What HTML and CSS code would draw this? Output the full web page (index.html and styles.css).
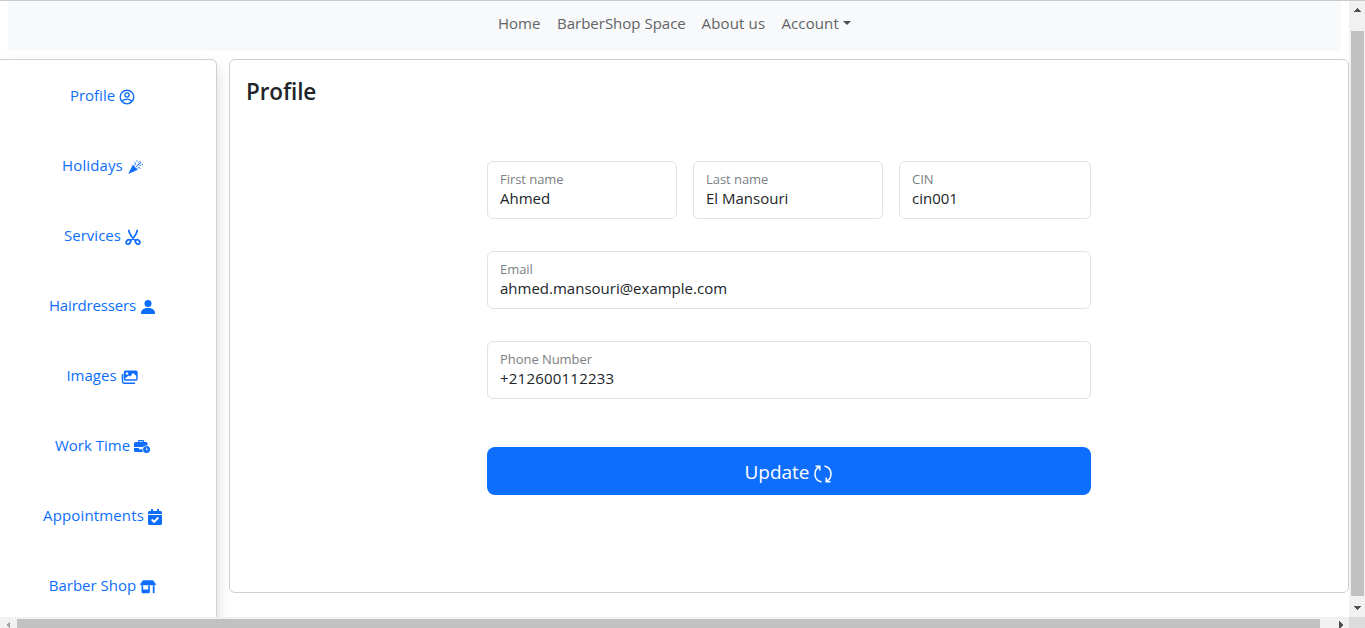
FILE: index.html
```html
<!DOCTYPE html>
<html lang="en">
<head>
<meta charset="utf-8">
<title>Profile</title>
<link rel="stylesheet" href="styles.css">
</head>
<body>
<div class="window">
  <div class="viewport">
    <nav class="navbar">
      <a class="nav-home">Home</a>
      <a class="nav-space">BarberShop Space</a>
      <a class="nav-about">About us</a>
      <a class="nav-account">Account</a><i class="caret"></i>
    </nav>
    <div class="content">
      <aside class="sidebar">
        <a class="item"><span>Profile</span>
          <svg width="16" height="16" viewBox="0 0 16 16" fill="none" stroke="currentColor" stroke-width="1.35"><circle cx="8" cy="8" r="6.8"/><circle cx="8" cy="6" r="2.1"/><path d="M3.2 12.6C5 9.3 11 9.3 12.8 12.6"/></svg></a>
        <a class="item"><span class="holidays">Holidays</span>
          <svg width="16" height="16" viewBox="0 0 16 16"><path fill="currentColor" d="M5.8 5.800 10.800 10.800 1.200 15Z"/><g fill="none" stroke="currentColor" stroke-width="1"><path d="M7.300 6.500C9 5.200 8.800 4 7.400 3M10.400 9.200C11.600 8.300 12.700 8.600 13.500 9.600M9 7.700 14 3.400"/></g><path fill="currentColor" d="M9.300 1.400h1.200v1.200H9.300zM11.200 3.200h1v1h-1zM12.500 2h1v1h-1zM14.600 5h1.200v1.200h-1.200zM12.600 6h1v1h-1z"/></svg></a>
        <a class="item"><span>Services</span>
          <svg width="16" height="16" viewBox="0 0 16 16" fill="none" stroke="currentColor" stroke-width="1.7"><path d="M3.800 .8C3.600 3.500 5.400 5.800 7 8l3.500 3.700M12.200.8C12.400 3.500 10.600 5.800 9 8l-3.500 3.700"/><ellipse cx="3.400" cy="12.900" rx="1.900" ry="2.500" transform="rotate(42 3.400 12.900)"/><ellipse cx="12.600" cy="12.900" rx="1.900" ry="2.500" transform="rotate(-42 12.600 12.900)"/></svg></a>
        <a class="item"><span class="hairdressers">Hairdressers</span>
          <svg width="16" height="16" viewBox="0 0 16 16" fill="currentColor"><circle cx="8" cy="4.500" r="3.500"/><path d="M1 15v-1.200C1.200 10.800 4 9 8 9s6.800 1.800 7 4.800V15Z"/></svg></a>
        <a class="item"><span>Images</span>
          <svg width="18" height="16" viewBox="0 0 18 16"><path fill="none" stroke="currentColor" stroke-width="1.500" d="M1.500 5v7.500q0 1.700 1.700 1.700H14"/><path fill="currentColor" fill-rule="evenodd" d="M4.500 1.500h10.500q1.700 0 1.700 1.700v6.800q0 1.700-1.700 1.700H4.500q-1.700 0-1.700-1.700V3.200q0-1.700 1.700-1.700ZM4.300 10.200H15.200V6.800L12 4 9.300 7.500 7.700 6.400 4.300 9.200ZM6 3.200a1.300 1.300 0 1 0 0 2.600 1.300 1.300 0 0 0 0-2.600Z"/></svg></a>
        <a class="item"><span>Work Time</span>
          <svg width="16" height="16" viewBox="0 0 16 16"><path fill="currentColor" fill-rule="evenodd" d="M4 3V2q0-1 1-1h4q1 0 1 1v1h2q1.500 0 1.500 1.500V6.500H12Q10 6.500 9 8H0V4.500Q0 3 1.500 3ZM5.200 3h3.600V2.200H5.200ZM0 9h5v1.300h3.300V9h.3q-.8 2.200.4 4H1.300Q0 13 0 11.700Z"/><circle cx="12.600" cy="10.600" r="3.500" fill="currentColor"/><path d="M12.500 8.500v2.300H14" fill="none" stroke="#fff" stroke-width=".8"/></svg></a>
        <a class="item"><span class="appointments">Appointments</span>
          <svg width="14" height="16" viewBox="0 0 448 512" fill="currentColor"><path d="M436 160H12c-6.600 0-12-5.400-12-12v-36c0-26.500 21.500-48 48-48h48V12c0-6.600 5.400-12 12-12h40c6.600 0 12 5.400 12 12v52h128V12c0-6.600 5.400-12 12-12h40c6.600 0 12 5.400 12 12v52h48c26.500 0 48 21.500 48 48v36c0 6.600-5.400 12-12 12zM12 192h424c6.600 0 12 5.400 12 12v260c0 26.500-21.500 48-48 48H48c-26.500 0-48-21.500-48-48V204c0-6.600 5.400-12 12-12zm333.300 96-28.200-28.400c-4.700-4.700-12.300-4.700-17-.1L194.100 364.700l-46-46.400c-4.700-4.700-12.300-4.700-17-.1l-28.400 28.200c-4.700 4.700-4.700 12.300-.1 17l82.600 83.300c4.700 4.700 12.300 4.700 17 .1l143-141.800c4.700-4.700 4.700-12.300.1-17z"/></svg></a>
        <a class="item"><span>Barber Shop</span>
          <svg width="16" height="16" viewBox="0 0 16 16" fill="currentColor"><path fill-rule="evenodd" d="M3 1.200h10L15.800 5q.3 1.300-1.100 1.300H1.300Q-.1 6.300.2 5ZM1.500 6h1.700v4.500h5V6h1.700v7q0 1.300-1.300 1.300H2.800q-1.300 0-1.300-1.300ZM12.800 6h1.700v8.300h-1.700Z"/></svg></a>
      </aside>
      <main class="card">
        <h1>Profile</h1>
        <form class="form">
          <div class="names">
            <div class="field"><label>First name</label><span>Ahmed</span></div>
            <div class="field"><label>Last name</label><span>El Mansouri</span></div>
            <div class="field"><label>CIN</label><span>cin001</span></div>
          </div>
          <div class="field"><label>Email</label><span>ahmed.mansouri@example.com</span></div>
          <div class="field"><label>Phone Number</label><span class="phone">+212600112233</span></div>
          <button type="button" class="update"><span>Update</span>
            <svg width="20" height="20" viewBox="0 0 20 20" fill="none" stroke="currentColor" stroke-width="1.500"><path d="M8.500 18C4.500 17 2 13.800 2 10c0-3 1.600-5.700 4.200-7M2.500 2.200h4.300v4.300M11.500 2c4 1 6.500 4.200 6.500 8 0 3-1.600 5.700-4.200 7M17.500 17.800h-4.300v-4.300"/></svg></button>
        </form>
      </main>
    </div>
  </div>
  <div class="vbar">
    <svg width="16" height="30" viewBox="0 0 16 30" fill="#505050" shape-rendering="crispEdges"><path d="M4 11h8L8 7Z"/></svg>
    <div class="vthumb"></div>
    <svg width="16" height="21" viewBox="0 0 16 21" fill="#505050" shape-rendering="crispEdges"><path d="M4.500 10h8l-4 4Z"/></svg>
  </div>
  <div class="hbar">
    <svg width="17" height="11" viewBox="0 0 17 11" fill="#a3a3a3" shape-rendering="crispEdges"><path d="M10 4v8L6 8Z"/></svg>
    <div class="hthumb"></div>
    <svg width="29" height="11" viewBox="0 0 29 11" fill="#505050" shape-rendering="crispEdges"><path d="M19 4v8l4-4Z"/></svg>
  </div>
  <div class="corner"></div>
</div>
</body>
</html>
```
FILE: styles.css
```css
* { box-sizing: border-box; }
body {
  margin: 0;
  overflow: hidden;
  background: #fff;
  font-family: "Open Sans", "Noto Sans", sans-serif;
  font-size: 15px;
  color: #212529;
}
svg { flex: none; display: block; }
.window {
  display: grid;
  grid-template-columns: 1349px 16px;
  grid-template-rows: 616px 11px;
  height: 628px;
  border-top: 1px solid #c8c9cb;
}
.viewport { overflow: hidden; }
.navbar {
  display: flex;
  height: 50px;
  margin: 0 8px;
  padding: 11px 0 0 490px;
  background: #f8f9fa;
  color: #626365;
  line-height: 22px;
  white-space: nowrap;
}
.nav-home { width: 59px; }
.nav-space { width: 144.500px; }
.nav-about { width: 80px; letter-spacing: .15px; }
.nav-account { width: 61px; letter-spacing: .1px; }
.caret {
  width: 0;
  height: 0;
  margin-top: 9px;
  border: 4.500px solid transparent;
  border-top-color: #4d4e50;
  border-bottom: 0;
}
.content { display: flex; padding-top: 8px; }
.sidebar {
  width: 217px;
  height: 640px;
  padding: 1px 11px 0 0;
  border: 1px solid #cfd0d1;
  border-left: 0;
  border-radius: 0 6px 6px 0;
  box-shadow: 0 8px 16px rgba(0, 0, 0, .15);
  background: #fff;
}
.item {
  display: flex;
  justify-content: center;
  align-items: center;
  gap: 4px;
  height: 70px;
  color: #0d6efd;
  white-space: nowrap;
}
.item span { margin-bottom: 2px; }
.item svg { margin-top: 2px; }
.holidays { letter-spacing: .12px; }
.hairdressers { letter-spacing: -.17px; }
.appointments { letter-spacing: .14px; }
.card {
  width: 1120px;
  height: 534px;
  margin-left: 12px;
  padding: 15px 16px;
  border: 1px solid #cfd0d1;
  border-radius: 6px;
  background: #fff;
}
h1 { margin: 0; font-size: 22.500px; line-height: 34px; font-weight: 600; letter-spacing: -.1px; }
.form { width: 604px; margin: 52px 0 0 241px; display: flex; flex-direction: column; gap: 32px; }
.names { display: grid; grid-template-columns: 190px 190px 192px; gap: 16px; }
.field {
  display: flex;
  flex-direction: column;
  height: 58px;
  padding: 7px 12px;
  border: 1px solid #dee2e6;
  border-radius: 6px;
  white-space: nowrap;
}
.field label { height: 18px; line-height: 20px; font-size: 13px; letter-spacing: -.05px; color: #7a7f84; }
.field span { line-height: 22px; }
.field .phone { letter-spacing: .22px; }
.update {
  display: flex;
  justify-content: center;
  align-items: center;
  gap: 3px;
  height: 48px;
  margin-top: 16px;
  padding: 0 1px 0 0;
  border: 0;
  border-radius: 8px;
  background: #0d6efd;
  color: #fff;
  font: 400 19px "Open Sans", sans-serif;
}
.update span { margin-top: 1px; }
.update svg { margin-top: 5px; }
.vbar { background: #f1f1f1; display: flex; flex-direction: column; }
.vthumb { width: 13px; height: 565px; margin-left: 2px; background: #c1c1c1; }
.hbar { background: #f1f1f1; display: flex; }
.hthumb { width: 1303px; height: 9px; margin-top: 2px; background: #c1c1c1; }
.corner { background: #dcdcdc; }
```
